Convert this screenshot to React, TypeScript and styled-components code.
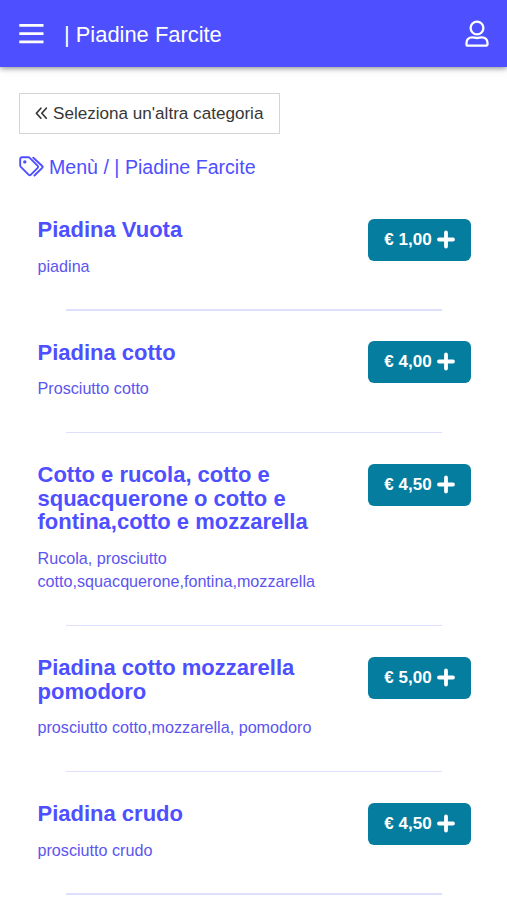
import React from "react";
import styled, { createGlobalStyle } from "styled-components";

const GlobalStyle = createGlobalStyle`
  *, *::before, *::after { box-sizing: border-box; }
  html, body { margin: 0; height: 100%; overflow: hidden; background: #fff; }
  body { font-family: "Liberation Sans", Arial, sans-serif; color: #4e4fff; }
  #root { height: 100%; }
  svg { display: block; flex: none; }
`;

const Page = styled.div`
  height: 900px;
  overflow: hidden;
  background: #fff;
`;

const TopBar = styled.header`
  display: flex;
  align-items: center;
  height: 66.5px;
  padding: 2px 17px 0 19px;
  color: #fff;
  background: #4e4fff;
  box-shadow: 0 1px 6px rgba(0, 0, 0, 0.5);
`;

const BarTitle = styled.h1`
  flex: 1;
  margin: 1px 0 0 19px;
  font-size: 21.9px;
  line-height: 28px;
  font-weight: 400;
`;

const IconButton = styled.button`
  padding: 0;
  border: 0;
  background: none;
  color: inherit;
`;

const Content = styled.main`
  padding: 26px 19px 0;
`;

const BackButton = styled.button`
  display: flex;
  align-items: center;
  gap: 5px;
  width: 261px;
  height: 41px;
  padding: 1px 0 0 15px;
  border: 1px solid #d5d5d5;
  background: #fff;
  color: #373737;
  font: 400 17.1px/20px "Liberation Sans", Arial, sans-serif;
  white-space: nowrap;
`;

const Breadcrumb = styled.h2`
  display: flex;
  align-items: center;
  gap: 5px;
  height: 26px;
  margin: 20.5px 0 0;
  font-size: 19.6px;
  font-weight: 400;
  white-space: nowrap;
`;

const MenuList = styled.ul`
  margin: 0;
  padding: 0 17px 0 18.5px;
  list-style: none;
`;

const MenuItem = styled.li`
  display: grid;
  grid-template-columns: 290px 103px;
  justify-content: space-between;
  align-items: start;
  padding-top: 38px;

  & + & { padding-top: 30px; }

  &::after {
    content: "";
    grid-column: 1 / -1;
    height: 1.5px;
    margin: 31px 29px 0 28.5px;
    background: #dedffc;
  }
`;

const ItemName = styled.h3`
  margin: 0;
  font-size: 22px;
  line-height: 23.5px;
  font-weight: 700;
`;

const ItemDescription = styled.p`
  margin: 13px 0 0;
  padding-top: 0.4px;
  margin-bottom: -0.4px;
  font-size: 16.16px;
  line-height: 23.5px;
  color: #5c55ef;
`;

const AddButton = styled.button`
  display: flex;
  align-items: center;
  justify-content: center;
  gap: 5px;
  width: 103px;
  height: 42px;
  margin-top: 0.5px;
  padding: 0;
  border: 0;
  border-radius: 6px;
  background: #047d9e;
  color: #fff;
  font: 700 17px/20px "Liberation Sans", Arial, sans-serif;
`;

const MenuIcon = () => (
  <svg width="26" height="24" viewBox="0 0 26 24" stroke="currentColor" strokeWidth="2.8">
    <path d="M.3 3.300h24.200M.3 11.600h24.200M.3 19.900h24.200" />
  </svg>
);

const UserIcon = () => (
  <svg width="26" height="28" viewBox="0 0 26 28" fill="none" stroke="currentColor" strokeWidth="2.300">
    <circle cx="13" cy="8" r="6.400" />
    <path d="M8.300 17.300c1.900 0 2.500.7 4.700.7s2.800-.7 4.700-.7c3.500 0 5.800 2.400 5.800 5.700v1.600c0 .7-.3 1-1 1H3.500c-.7 0-1-.3-1-1V23c0-3.300 2.300-5.700 5.800-5.700z" />
  </svg>
);

const BackIcon = () => (
  <svg width="13" height="14" viewBox="0 0 13 14" fill="none" stroke="currentColor" strokeWidth="1.700" strokeLinecap="round" strokeLinejoin="round">
    <path d="M5.900 1.200 1.400 6.200l4.500 5M11.300 1.200l-4.500 5 4.500 5" />
  </svg>
);

const TagsIcon = () => (
  <svg width="25" height="22" viewBox="0 0 25 22" fill="none" stroke="currentColor" strokeWidth="1.900" strokeLinecap="round" strokeLinejoin="round">
    <path d="M1.200 3.100v6.300c0 .6.2 1 .6 1.400l8 8c.6.6 1.300.6 1.900 0l7-7c.6-.6.6-1.300 0-1.900l-8-8c-.4-.4-.8-.6-1.400-.6H3c-1.100 0-1.800.7-1.800 1.800z" />
    <path d="M14.300 1.700 23.200 10c.6.6.6 1.200 0 1.800l-7.700 7.700" />
    <circle cx="5.800" cy="5.900" r="1.700" fill="currentColor" stroke="none" />
  </svg>
);

const PlusIcon = () => (
  <svg width="18" height="20" viewBox="0 0 18 20" stroke="currentColor" strokeWidth="3.800" strokeLinecap="round">
    <path d="M2 9.500h14M9 2.500v14" />
  </svg>
);

const items = [
  { name: "Piadina Vuota", description: "piadina", price: "€ 1,00" },
  { name: "Piadina cotto", description: "Prosciutto cotto", price: "€ 4,00" },
  {
    name: "Cotto e rucola, cotto e squacquerone o cotto e fontina,cotto e mozzarella",
    description: "Rucola, prosciutto cotto,squacquerone,fontina,mozzarella",
    price: "€ 4,50",
  },
  {
    name: "Piadina cotto mozzarella pomodoro",
    description: "prosciutto cotto,mozzarella, pomodoro",
    price: "€ 5,00",
  },
  { name: "Piadina crudo", description: "prosciutto crudo", price: "€ 4,50" },
];

export default function App() {
  return (
    <Page>
      <GlobalStyle />
      <TopBar>
        <IconButton aria-label="Menu"><MenuIcon /></IconButton>
        <BarTitle>| Piadine Farcite</BarTitle>
        <IconButton aria-label="Account"><UserIcon /></IconButton>
      </TopBar>
      <Content>
        <BackButton><BackIcon />Seleziona un'altra categoria</BackButton>
        <Breadcrumb><TagsIcon />Menù / | Piadine Farcite</Breadcrumb>
        <MenuList>
          {items.map((item) => (
            <MenuItem key={item.name}>
              <div>
                <ItemName>{item.name}</ItemName>
                <ItemDescription>{item.description}</ItemDescription>
              </div>
              <AddButton>{item.price}<PlusIcon /></AddButton>
            </MenuItem>
          ))}
        </MenuList>
      </Content>
    </Page>
  );
}
